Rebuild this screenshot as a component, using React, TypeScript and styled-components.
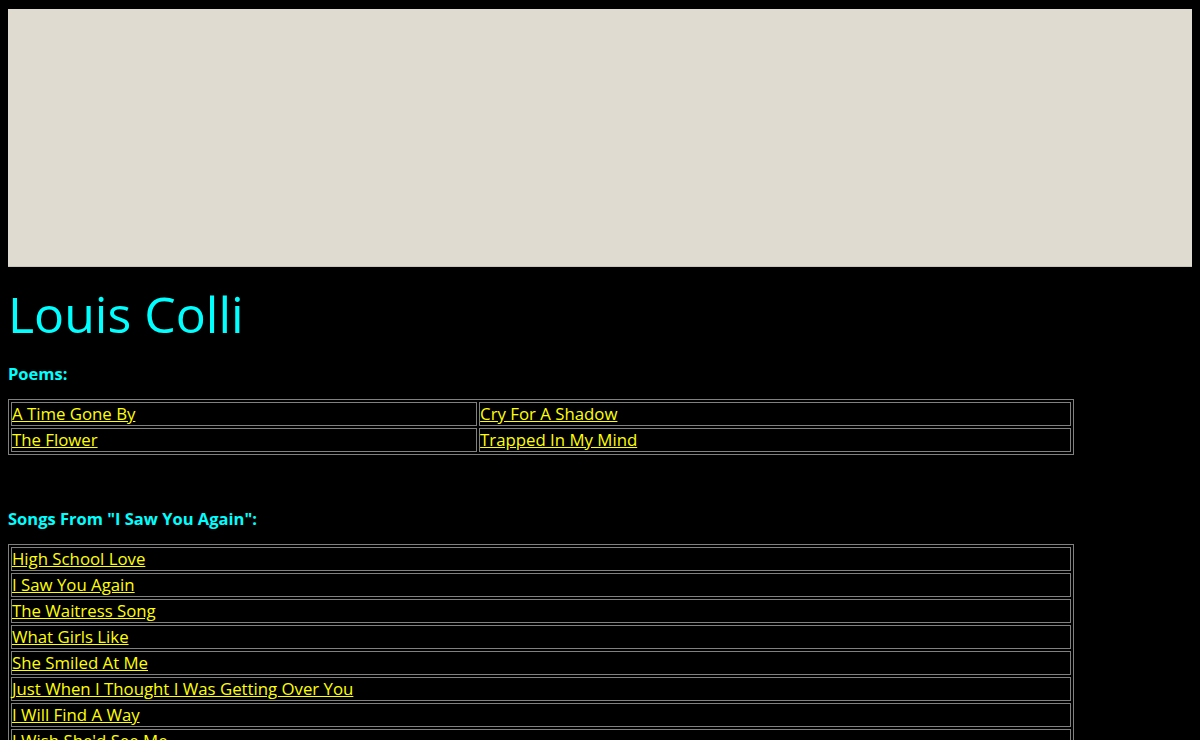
import React from 'react'
import styled, { createGlobalStyle } from 'styled-components'

const GlobalStyle = createGlobalStyle`
  body {
    margin: 8px;
    background: #000000;
    font-family: 'Open Sans', 'Noto Sans', sans-serif;
    font-size: 17px;
    color: #ffffff;
  }
`

const Banner = styled.div`
  height: 257px;
  margin-top: 1px;
  background: #dfdbd0;
  border-bottom: 1px solid #c9c5ba;
`

const Title = styled.h1`
  margin: 17px 0 19px;
  font-size: 50px;
  font-weight: 400;
  line-height: 60px;
  color: #00ffff;
`

const SectionLabel = styled.h4`
  margin: 0 0 14px;
  font-size: 16.5px;
  font-weight: 700;
  line-height: 22px;
  color: #00ffff;
`

const Table = styled.table`
  width: 90%;
  border: 1px solid #808080;
  border-spacing: 2px;
  margin-bottom: 53px;
`

const Cell = styled.td`
  border: 1px solid #808080;
  padding: 1px 0;
  font-size: 16.8px;
  line-height: 20px;
`

const Link = styled.a`
  color: #ffff00;
  text-decoration: underline;
`

const POEMS = [
  ['A Time Gone By', 'Cry For A Shadow'],
  ['The Flower', 'Trapped In My Mind'],
]

const SONGS = [
  'High School Love',
  'I Saw You Again',
  'The Waitress Song',
  'What Girls Like',
  'She Smiled At Me',
  'Just When I Thought I Was Getting Over You',
  'I Will Find A Way',
  "I Wish She'd See Me",
  'Without You',
]

const App = () => {
  return (
    <>
      <GlobalStyle />
      <Banner />
      <Title>Louis Colli</Title>
      <SectionLabel>Poems:</SectionLabel>
      <Table>
        <tbody>
          {POEMS.map((row, i) => (
            <tr key={i}>
              {row.map((title) => (
                <Cell key={title}>
                  <Link href='#'>{title}</Link>
                </Cell>
              ))}
            </tr>
          ))}
        </tbody>
      </Table>
      <SectionLabel>Songs From "I Saw You Again":</SectionLabel>
      <Table>
        <tbody>
          {SONGS.map((title) => (
            <tr key={title}>
              <Cell>
                <Link href='#'>{title}</Link>
              </Cell>
            </tr>
          ))}
        </tbody>
      </Table>
    </>
  )
}

export default App
